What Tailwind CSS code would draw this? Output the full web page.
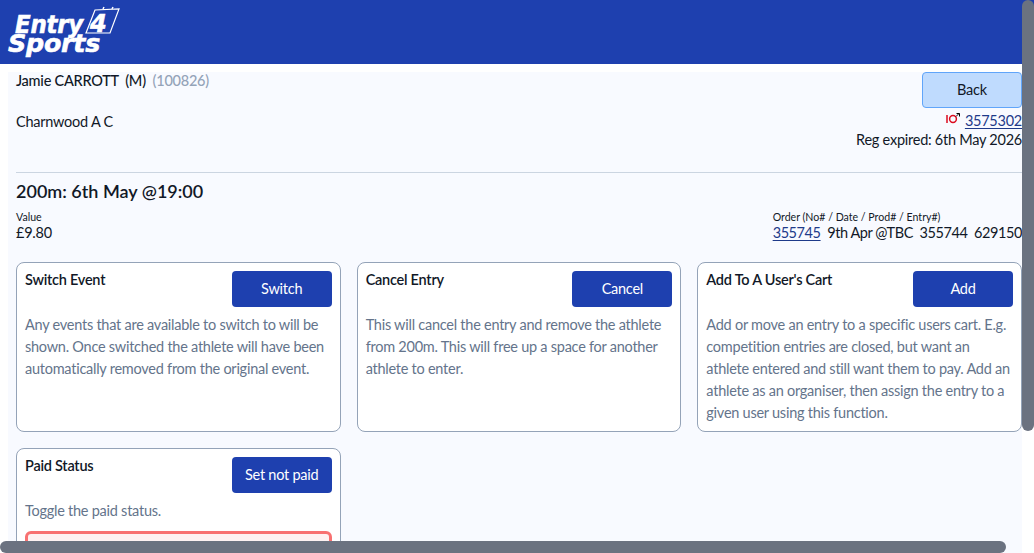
<!DOCTYPE html>
<html lang="en">
<head>
<meta charset="UTF-8">
<title>Entry4Sports</title>
<script src="https://cdn.jsdelivr.net/npm/@tailwindcss/browser@4"></script>
</head>
<body class="bg-white font-['Lato','Noto_Sans',sans-serif] h-[553px] w-[1034px] overflow-hidden relative text-[14.5px] tracking-[-0.25px] text-[#111827]">

<!-- Header -->
<header class="bg-[#1e40af] h-16">
    <svg class="block" width="124" height="60" viewBox="0 0 124 60">
        <path d="M95 10 L119 9 L110 33 L86 33 Z" fill="none" stroke="#fff" stroke-width="1.2"/>
        <path d="M103 9 L104 7 M112 9 L113 7" stroke="#fff" stroke-width="1.5"/>
        <g fill="#fff" stroke="#fff" stroke-width="0.6" font-family="DejaVu Sans" font-style="italic" font-weight="700" font-size="25">
            <text x="15" y="33" textLength="68" lengthAdjust="spacingAndGlyphs">Entry</text>
            <text x="8" y="52" textLength="92" lengthAdjust="spacingAndGlyphs">Sports</text>
            <text x="90" y="32" font-size="24">4</text>
        </g>
    </svg>
</header>

<main class="mt-2 ml-2 bg-[#f8faff] h-[481px] pl-2 w-[1014px]">
    <!-- Athlete -->
    <div class="flex justify-between">
        <div>
            <div class="font-medium leading-5 -mt-px whitespace-pre">Jamie CARROTT  (M)  <span class="text-[#94a3b8]">(100826)</span></div>
            <div class="mt-[21px] leading-5">Charnwood A C</div>
        </div>
        <div class="text-right">
            <button class="w-[100px] h-9 bg-[#bfdbfe] border border-[#60a5fa] rounded-[4px]">Back</button>
            <div class="flex justify-end items-center gap-1 leading-5 mt-[3px]">
                <svg class="mb-1" width="16" height="14" viewBox="0 0 16 14" fill="none" stroke="#dc0a1e" stroke-width="1.5"><path d="M2 3v8"/><circle cx="8" cy="7" r="3.400"/><path d="M11.500 1.500h3M14.500 1.500v3M11 4.500l3-3" stroke="#000" stroke-width="1"/></svg>
                <a class="text-[#1e3a8a] underline underline-offset-2">3575302</a>
            </div>
            <div class="leading-5 -mt-px">Reg expired: 6th May 2026</div>
        </div>
    </div>

    <hr class="border-[#cbd5e1] mt-[22px]">

    <h2 class="text-lg tracking-normal font-semibold leading-6 mt-1.5">200m: 6th May @19:00</h2>

    <div class="flex justify-between mt-2">
        <div>
            <div class="text-[10.6px] tracking-normal leading-3">Value</div>
            <div class="leading-5">£9.80</div>
        </div>
        <div>
            <div class="text-[10.6px] tracking-normal leading-3">Order (No# / Date / Prod# / Entry#)</div>
            <div class="leading-5 tracking-[-0.42px] whitespace-pre"><a class="text-[#1e3a8a] underline underline-offset-2">355745</a>  9th Apr @TBC  355744  629150</div>
        </div>
    </div>

    <!-- Action cards -->
    <div class="grid grid-cols-3 gap-x-4 gap-y-4 mt-[19px] w-[1006px] text-[#64748b] leading-[22px]">
        <section class="bg-white border border-[#94a3b8] rounded-lg h-[170px] px-2 pt-2">
            <div class="flex justify-between h-[43px]">
                <span class="font-semibold text-[#111827] leading-5 -mt-px">Switch Event</span>
                <button class="w-[100px] h-9 bg-[#1e40af] text-white rounded-[4px]">Switch</button>
            </div>
            <p>Any events that are available to switch to will be shown. Once switched the athlete will have been automatically removed from the original event.</p>
        </section>
        <section class="bg-white border border-[#94a3b8] rounded-lg h-[170px] px-2 pt-2">
            <div class="flex justify-between h-[43px]">
                <span class="font-semibold text-[#111827] leading-5 -mt-px">Cancel Entry</span>
                <button class="w-[100px] h-9 bg-[#1e40af] text-white rounded-[4px]">Cancel</button>
            </div>
            <p>This will cancel the entry and remove the athlete from 200m. This will free up a space for another athlete to enter.</p>
        </section>
        <section class="bg-white border border-[#94a3b8] rounded-lg h-[170px] px-2 pt-2">
            <div class="flex justify-between h-[43px]">
                <span class="font-semibold text-[#111827] leading-5 -mt-px">Add To A User's Cart</span>
                <button class="w-[100px] h-9 bg-[#1e40af] text-white rounded-[4px]">Add</button>
            </div>
            <p>Add or move an entry to a specific users cart. E.g. competition entries are closed, but want an athlete entered and still want them to pay. Add an athlete as an organiser, then assign the entry to a given user using this function.</p>
        </section>
        <section class="bg-white border border-[#94a3b8] rounded-lg h-[170px] px-2 pt-2">
            <div class="flex justify-between h-[43px]">
                <span class="font-semibold text-[#111827] leading-5 -mt-px">Paid Status</span>
                <button class="w-[100px] h-9 bg-[#1e40af] text-white rounded-[4px]">Set not paid</button>
            </div>
            <p>Toggle the paid status.</p>
            <div class="mt-[9px] h-10 bg-[#fef2f2] border-[3px] border-[#f87171] rounded-md"></div>
        </section>
    </div>
</main>

<!-- Scrollbars -->
<div class="absolute top-0 right-0 w-3 h-[431px] bg-[#6b7280] rounded-md"></div>
<div class="absolute bottom-0 left-0 w-[1006px] h-3 bg-[#6b7280] rounded-full"></div>
</body>
</html>
